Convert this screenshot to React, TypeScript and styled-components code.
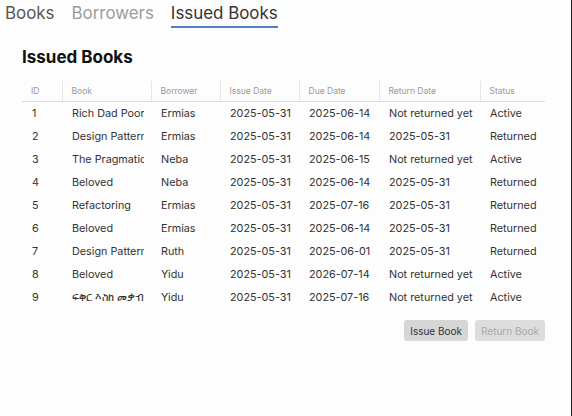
import styled, { createGlobalStyle } from "styled-components";

const Global = createGlobalStyle`
  html, body {
    margin: 0;
    padding: 0;
    background: #fdfdfd;
  }
  body {
    font-family: "Inter", "Noto Sans", "DejaVu Sans", sans-serif;
  }
`;

const Page = styled.div`
  width: 571px;
  height: 416px;
  border-right: 1px solid #222;
  box-sizing: content-box;
  overflow: hidden;
`;

const Tabs = styled.nav`
  display: flex;
  gap: 17px;
  padding: 0 0 0 5px;
  height: 28px;
`;

const Tab = styled.div<{ $active?: boolean; $tone: string }>`
  font-size: 16.9px;
  line-height: 26px;
  height: 26px;
  color: ${(p) => p.$tone};
  border-bottom: 2px solid ${(p) => (p.$active ? "#4a80c4" : "transparent")};
`;

const Section = styled.section`
  padding: 17px 27px 0 22px;
`;

const Title = styled.h2`
  margin: 0 0 12px;
  font-size: 17px;
  font-weight: 700;
  line-height: 24px;
  color: #111;
`;

const Table = styled.table`
  width: 523px;
  border-collapse: collapse;
  table-layout: fixed;
`;

const Th = styled.th<{ $first?: boolean }>`
  font-size: 8.5px;
  font-weight: 400;
  color: #9a9a9a;
  text-align: left;
  height: 20px;
  padding: 0 9px;
  border-bottom: 1px solid #dcdcdc;
  border-left: ${(p) => (p.$first ? "none" : "1px solid #e6e6e6")};
`;

const Td = styled.td`
  font-size: 10.8px;
  color: #333;
  height: 23px;
  padding: 0 7px 0 10px;
  white-space: nowrap;
`;

const Clip = styled.span`
  display: block;
  white-space: nowrap;
  overflow: hidden;
`;

const Actions = styled.div`
  display: flex;
  justify-content: flex-end;
  gap: 7px;
  width: 523px;
  margin-top: 11px;
`;

const Button = styled.button`
  font-family: inherit;
  font-size: 10px;
  height: 21px;
  padding: 0 6px;
  border: none;
  border-radius: 3px;
  background: #d6d6d6;
  color: #333;
  &:disabled {
    color: #a8a8a8;
    background: #dddddd;
  }
`;

const columns = [
  { label: "ID", width: 40 },
  { label: "Book", width: 89 },
  { label: "Borrower", width: 69 },
  { label: "Issue Date", width: 79 },
  { label: "Due Date", width: 80 },
  { label: "Return Date", width: 101 },
  { label: "Status", width: 65 },
];

const rows = [
  ["1", "Rich Dad Poor Dad", "Ermias", "2025-05-31", "2025-06-14", "Not returned yet", "Active"],
  ["2", "Design Patterns", "Ermias", "2025-05-31", "2025-06-14", "2025-05-31", "Returned"],
  ["3", "The Pragmatic Programmer", "Neba", "2025-05-31", "2025-06-15", "Not returned yet", "Active"],
  ["4", "Beloved", "Neba", "2025-05-31", "2025-06-14", "2025-05-31", "Returned"],
  ["5", "Refactoring", "Ermias", "2025-05-31", "2025-07-16", "2025-05-31", "Returned"],
  ["6", "Beloved", "Ermias", "2025-05-31", "2025-06-14", "2025-05-31", "Returned"],
  ["7", "Design Patterns", "Ruth", "2025-05-31", "2025-06-01", "2025-05-31", "Returned"],
  ["8", "Beloved", "Yidu", "2025-05-31", "2026-07-14", "Not returned yet", "Active"],
  ["9", "ፍቅር እስከ መቃብር", "Yidu", "2025-05-31", "2025-07-16", "Not returned yet", "Active"],
];

export default function App() {
  return (
    <Page>
      <Global />
      <Tabs>
        <Tab $tone="#555">Books</Tab>
        <Tab $tone="#9c9c9c">Borrowers</Tab>
        <Tab $tone="#333" $active>
          Issued Books
        </Tab>
      </Tabs>
      <Section>
        <Title>Issued Books</Title>
        <Table>
          <colgroup>
            {columns.map((c) => (
              <col key={c.label} style={{ width: c.width }} />
            ))}
          </colgroup>
          <thead>
            <tr>
              {columns.map((c, i) => (
                <Th key={c.label} $first={i === 0}>
                  {c.label}
                </Th>
              ))}
            </tr>
          </thead>
          <tbody>
            {rows.map((r) => (
              <tr key={r[0]}>
                {r.map((cell, i) => (
                  <Td key={i}>{i === 1 ? <Clip>{cell}</Clip> : cell}</Td>
                ))}
              </tr>
            ))}
          </tbody>
        </Table>
        <Actions>
          <Button>Issue Book</Button>
          <Button disabled>Return Book</Button>
        </Actions>
      </Section>
    </Page>
  );
}
